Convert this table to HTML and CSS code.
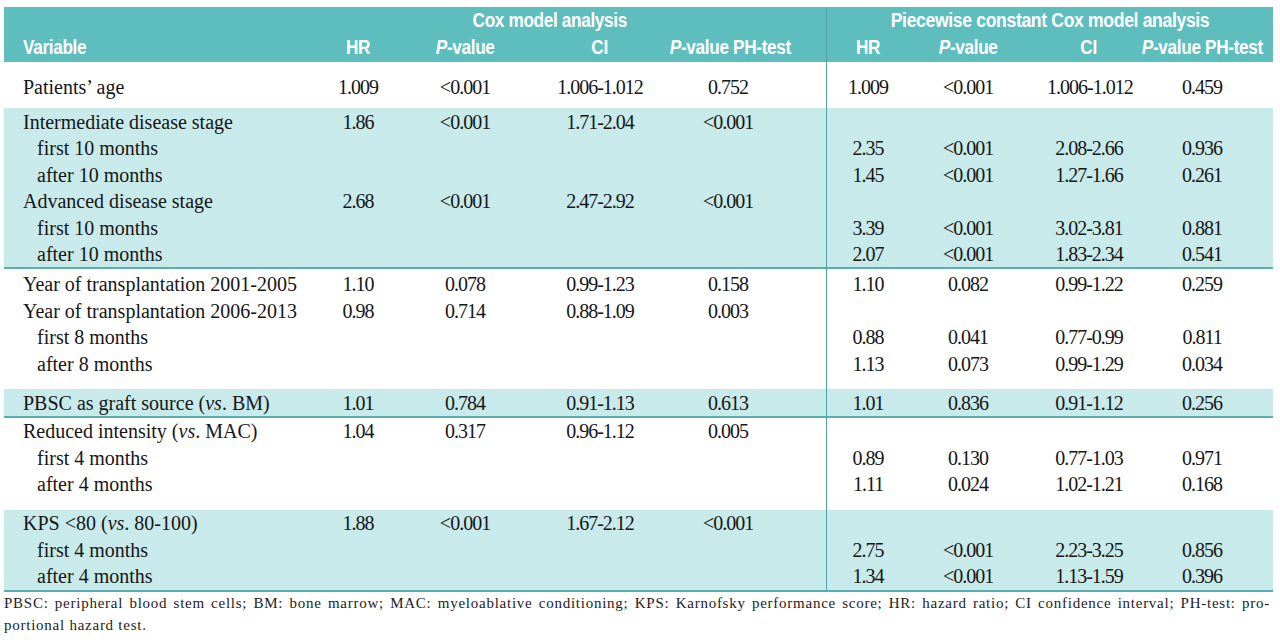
FILE: index.html
```html
<!DOCTYPE html>
<html lang="en">
<head>
<meta charset="utf-8">
<title>Cox model analysis</title>
<link rel="stylesheet" href="styles.css">
</head>
<body>
<div class="page">
<table class="results">
  <colgroup>
    <col class="w-var"><col class="w-hr"><col class="w-p"><col class="w-ci"><col class="w-ph">
    <col class="w-hr2"><col class="w-p2"><col class="w-ci2"><col class="w-ph2">
  </colgroup>
  <thead>
    <tr class="h1">
      <th class="c-var"></th>
      <th colspan="4" class="grp-left"><span class="hx">Cox model analysis</span></th>
      <th colspan="4" class="grp-right"><span class="hx">Piecewise constant Cox model analysis</span></th>
    </tr>
    <tr class="h2">
      <th class="c-var"><span class="hx">Variable</span></th>
      <th><span class="hx">HR</span></th>
      <th><span class="hx"><i>P</i>-value</span></th>
      <th><span class="hx">CI</span></th>
      <th class="c-ph"><span class="hx"><i>P</i>-value PH-test</span></th>
      <th class="c-hr2"><span class="hx">HR</span></th>
      <th><span class="hx"><i>P</i>-value</span></th>
      <th><span class="hx">CI</span></th>
      <th class="c-ph2"><span class="hx"><i>P</i>-value PH-test</span></th>
    </tr>
  </thead>
  <tbody class="grp-age">
    <tr><td class="c-var">Patients’ age</td><td>1.009</td><td>&lt;0.001</td><td>1.006-1.012</td><td class="c-ph">0.752</td><td class="c-hr2">1.009</td><td>&lt;0.001</td><td>1.006-1.012</td><td class="c-ph2">0.459</td></tr>
  </tbody>
  <tbody class="shade">
    <tr><td class="c-var">Intermediate disease stage</td><td>1.86</td><td>&lt;0.001</td><td>1.71-2.04</td><td class="c-ph">&lt;0.001</td><td class="c-hr2"></td><td></td><td></td><td class="c-ph2"></td></tr>
    <tr><td class="c-var sub">first 10 months</td><td></td><td></td><td></td><td class="c-ph"></td><td class="c-hr2">2.35</td><td>&lt;0.001</td><td>2.08-2.66</td><td class="c-ph2">0.936</td></tr>
    <tr><td class="c-var sub">after 10 months</td><td></td><td></td><td></td><td class="c-ph"></td><td class="c-hr2">1.45</td><td>&lt;0.001</td><td>1.27-1.66</td><td class="c-ph2">0.261</td></tr>
    <tr><td class="c-var">Advanced disease stage</td><td>2.68</td><td>&lt;0.001</td><td>2.47-2.92</td><td class="c-ph">&lt;0.001</td><td class="c-hr2"></td><td></td><td></td><td class="c-ph2"></td></tr>
    <tr><td class="c-var sub">first 10 months</td><td></td><td></td><td></td><td class="c-ph"></td><td class="c-hr2">3.39</td><td>&lt;0.001</td><td>3.02-3.81</td><td class="c-ph2">0.881</td></tr>
    <tr><td class="c-var sub">after 10 months</td><td></td><td></td><td></td><td class="c-ph"></td><td class="c-hr2">2.07</td><td>&lt;0.001</td><td>1.83-2.34</td><td class="c-ph2">0.541</td></tr>
  </tbody>
  <tbody class="plain">
    <tr><td class="c-var">Year of transplantation 2001-2005</td><td>1.10</td><td>0.078</td><td>0.99-1.23</td><td class="c-ph">0.158</td><td class="c-hr2">1.10</td><td>0.082</td><td>0.99-1.22</td><td class="c-ph2">0.259</td></tr>
    <tr><td class="c-var">Year of transplantation 2006-2013</td><td>0.98</td><td>0.714</td><td>0.88-1.09</td><td class="c-ph">0.003</td><td class="c-hr2"></td><td></td><td></td><td class="c-ph2"></td></tr>
    <tr><td class="c-var sub">first 8 months</td><td></td><td></td><td></td><td class="c-ph"></td><td class="c-hr2">0.88</td><td>0.041</td><td>0.77-0.99</td><td class="c-ph2">0.811</td></tr>
    <tr><td class="c-var sub">after 8 months</td><td></td><td></td><td></td><td class="c-ph"></td><td class="c-hr2">1.13</td><td>0.073</td><td>0.99-1.29</td><td class="c-ph2">0.034</td></tr>
  </tbody>
  <tbody class="shade">
    <tr><td class="c-var">PBSC as graft source (<i>vs</i>. BM)</td><td>1.01</td><td>0.784</td><td>0.91-1.13</td><td class="c-ph">0.613</td><td class="c-hr2">1.01</td><td>0.836</td><td>0.91-1.12</td><td class="c-ph2">0.256</td></tr>
  </tbody>
  <tbody class="plain tight">
    <tr><td class="c-var">Reduced intensity (<i>vs</i>. MAC)</td><td>1.04</td><td>0.317</td><td>0.96-1.12</td><td class="c-ph">0.005</td><td class="c-hr2"></td><td></td><td></td><td class="c-ph2"></td></tr>
    <tr><td class="c-var sub">first 4 months</td><td></td><td></td><td></td><td class="c-ph"></td><td class="c-hr2">0.89</td><td>0.130</td><td>0.77-1.03</td><td class="c-ph2">0.971</td></tr>
    <tr><td class="c-var sub">after 4 months</td><td></td><td></td><td></td><td class="c-ph"></td><td class="c-hr2">1.11</td><td>0.024</td><td>1.02-1.21</td><td class="c-ph2">0.168</td></tr>
  </tbody>
  <tbody class="shade">
    <tr><td class="c-var">KPS &lt;80 (<i>vs</i>. 80-100)</td><td>1.88</td><td>&lt;0.001</td><td>1.67-2.12</td><td class="c-ph">&lt;0.001</td><td class="c-hr2"></td><td></td><td></td><td class="c-ph2"></td></tr>
    <tr><td class="c-var sub">first 4 months</td><td></td><td></td><td></td><td class="c-ph"></td><td class="c-hr2">2.75</td><td>&lt;0.001</td><td>2.23-3.25</td><td class="c-ph2">0.856</td></tr>
    <tr><td class="c-var sub">after 4 months</td><td></td><td></td><td></td><td class="c-ph"></td><td class="c-hr2">1.34</td><td>&lt;0.001</td><td>1.13-1.59</td><td class="c-ph2">0.396</td></tr>
  </tbody>
</table>
<p class="footnote"><span class="line">PBSC: peripheral blood stem cells; BM: bone marrow; MAC: myeloablative conditioning; KPS: Karnofsky performance score; HR: hazard ratio; CI confidence interval; PH-test: pro-</span>portional hazard test.</p>
</div>
</body>
</html>
```
FILE: styles.css
```css
html, body {
  margin: 0;
  background: #ffffff;
}

.page {
  padding: 7px 7px 0 4px;
}

.results {
  width: 1269px;
  table-layout: fixed;
  border-collapse: separate;
  border-spacing: 0;
  font-family: "Liberation Serif", "Times New Roman", serif;
  font-size: 20px;
  color: #161616;
}

.w-var { width: 322px; }
.w-hr { width: 64px; }
.w-p { width: 150px; }
.w-ci { width: 120px; }
.w-ph { width: 166px; }
.w-hr2 { width: 63px; }
.w-p2 { width: 158px; }
.w-ci2 { width: 84px; }
.w-ph2 { width: 142px; }

/* header */
.results thead th {
  background: #5ebdbd;
  color: #ffffff;
  font-family: "Liberation Sans", Arial, sans-serif;
  font-weight: bold;
  font-size: 20px;
  line-height: 22px;
  padding: 0;
  text-align: center;
  white-space: nowrap;
  vertical-align: bottom;
  overflow: visible;
}

/* condensed heading face: the bold sans narrowed horizontally */
.results .hx {
  display: inline-block;
  letter-spacing: -0.4px;
  transform: scaleX(0.86);
  transform-origin: 50% 50%;
}

.results .grp-right .hx {
  transform: scaleX(0.88);
}

.results thead th i {
  font-style: italic;
}

.results .h1 th {
  padding-top: 2px;
}

.results .h2 th {
  padding-top: 5px;
  padding-bottom: 4px;
}

.results .grp-left {
  padding-right: 52px;
}

.results .grp-right {
  border-left: 1px solid #4ea3a4;
}

.results thead th.c-var {
  text-align: left;
  padding-left: 19px;
}

.results thead th.c-var .hx {
  transform-origin: 0 50%;
}

.results thead th.c-ph2 {
  padding-right: 0;
}

/* body cells */
.results td {
  padding: 0;
  height: 26.4px;
  line-height: 26.4px;
  text-align: center;
  white-space: nowrap;
  letter-spacing: -1px;
  vertical-align: middle;
}

.results td.c-var {
  text-align: left;
  padding-left: 19px;
  letter-spacing: 0;
}

.results td.c-var.sub {
  padding-left: 33px;
}

.results .c-ph {
  padding-right: 30px;
}

.results .c-hr2 {
  border-left: 1px solid #4ea3a4;
  padding-left: 20px;
}

.results td i {
  font-style: italic;
}

/* groups */
.grp-age td {
  padding-top: 12px;
  padding-bottom: 8px;
}

.shade td {
  background: #c8eaea;
}

.shade tr:first-child td {
  padding-top: 0.5px;
}

.shade tr:last-child td {
  border-bottom: 2px solid #5aaeaf;
}

.plain tr:first-child td {
  padding-top: 2px;
}

.plain.tight tr:first-child td {
  padding-top: 0;
}

.plain tr:last-child td {
  padding-bottom: 12.4px;
}

/* footnote */
.footnote {
  margin: 0;
  width: 1266px;
  font-family: "Liberation Serif", "Times New Roman", serif;
  font-size: 15px;
  line-height: 22px;
  letter-spacing: 0.75px;
  color: #222222;
}

.footnote .line {
  display: block;
  white-space: nowrap;
  text-align: justify;
  text-align-last: justify;
}
```
